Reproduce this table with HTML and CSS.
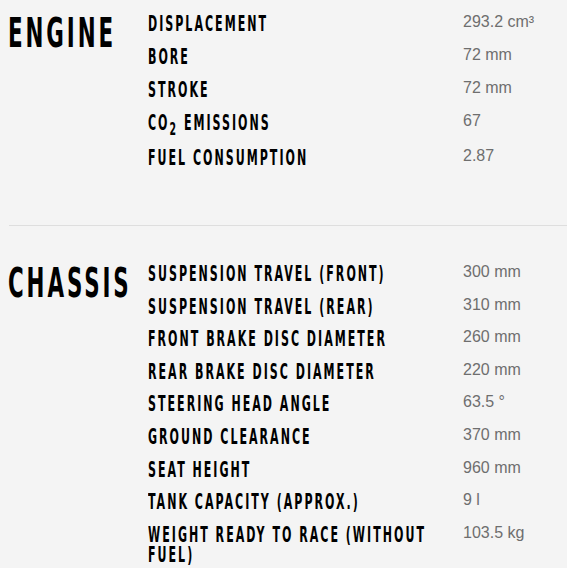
FILE: index.html
```html
<!DOCTYPE html>
<html lang="en">
<head>
<meta charset="utf-8">
<title>Specifications</title>
<link rel="stylesheet" href="styles.css">
</head>
<body>
<main class="specs">
  <section class="group group-first">
    <h2 class="group-title"><span class="stretch">ENGINE</span></h2>
    <dl class="rows">
      <div class="row"><dt class="label"><span class="stretch">DISPLACEMENT</span></dt><dd class="value">293.2 cm³</dd></div>
      <div class="row"><dt class="label"><span class="stretch">BORE</span></dt><dd class="value">72 mm</dd></div>
      <div class="row"><dt class="label"><span class="stretch">STROKE</span></dt><dd class="value">72 mm</dd></div>
      <div class="row row-sub"><dt class="label"><span class="stretch">CO<sub class="sub">2</sub> EMISSIONS</span></dt><dd class="value">67</dd></div>
      <div class="row"><dt class="label"><span class="stretch">FUEL CONSUMPTION</span></dt><dd class="value">2.87</dd></div>
    </dl>
  </section>
  <hr class="divider">
  <section class="group group-second">
    <h2 class="group-title"><span class="stretch">CHASSIS</span></h2>
    <dl class="rows">
      <div class="row"><dt class="label"><span class="stretch">SUSPENSION TRAVEL (FRONT)</span></dt><dd class="value">300 mm</dd></div>
      <div class="row"><dt class="label"><span class="stretch">SUSPENSION TRAVEL (REAR)</span></dt><dd class="value">310 mm</dd></div>
      <div class="row"><dt class="label"><span class="stretch">FRONT BRAKE DISC DIAMETER</span></dt><dd class="value">260 mm</dd></div>
      <div class="row"><dt class="label"><span class="stretch">REAR BRAKE DISC DIAMETER</span></dt><dd class="value">220 mm</dd></div>
      <div class="row"><dt class="label"><span class="stretch">STEERING HEAD ANGLE</span></dt><dd class="value">63.5 °</dd></div>
      <div class="row"><dt class="label"><span class="stretch">GROUND CLEARANCE</span></dt><dd class="value">370 mm</dd></div>
      <div class="row"><dt class="label"><span class="stretch">SEAT HEIGHT</span></dt><dd class="value">960 mm</dd></div>
      <div class="row"><dt class="label"><span class="stretch">TANK CAPACITY (APPROX.)</span></dt><dd class="value">9 l</dd></div>
      <div class="row row-last"><dt class="label"><span class="stretch">WEIGHT READY TO RACE (WITHOUT FUEL)</span></dt><dd class="value">103.5 kg</dd></div>
    </dl>
  </section>
</main>
</body>
</html>
```

FILE: styles.css
```css
html, body {
  margin: 0;
  padding: 0;
  background: #f4f4f4;
}

.specs {
  width: 567px;
  background: #f4f4f4;
}

.group {
  display: grid;
  grid-template-columns: 140px 1fr;
  padding-left: 8px;
}

.group-first {
  padding-top: 14px;
  padding-bottom: 61px;
}

.group-second {
  padding-top: 38px;
}

/* condensed look: small DejaVu Condensed Bold stretched vertically */
.stretch {
  display: block;
  transform-origin: 0 0;
}

.group-title {
  margin: 0;
  font-family: "DejaVu Sans Condensed", "DejaVu Sans", sans-serif;
  font-weight: 700;
  font-size: 23.8px;
  line-height: 23.8px;
  letter-spacing: 2.9px;
  color: #000;
  white-space: nowrap;
}

.group-title .stretch {
  transform: scaleY(1.724);
}

.rows {
  margin: 0;
  display: flex;
  flex-direction: column;
  gap: 16.6px;
}

.group-first .rows {
  gap: 17px;
}

.row {
  display: grid;
  grid-template-columns: 292px 1fr;
  column-gap: 23px;
  align-items: start;
}

.row-sub {
  padding-bottom: 2px;
}

.row-last {
  padding-bottom: 20px;
}

.label {
  margin: 0;
  font-family: "DejaVu Sans Condensed", "DejaVu Sans", sans-serif;
  font-weight: 700;
  font-size: 12.3px;
  line-height: 12px;
  letter-spacing: 2px;
  color: #000;
}

.label .stretch {
  transform: scaleY(1.6667);
}

.sub {
  font-size: 0.85em;
  line-height: 0;
  vertical-align: -3px;
}

.value {
  margin: 0;
  font-family: "Liberation Sans", Arial, sans-serif;
  font-size: 16px;
  line-height: 16px;
  color: #6e6e6e;
  white-space: nowrap;
}

.divider {
  margin: 0 0 0 9px;
  border: 0;
  border-top: 1px solid #dedede;
  height: 0;
}
```
